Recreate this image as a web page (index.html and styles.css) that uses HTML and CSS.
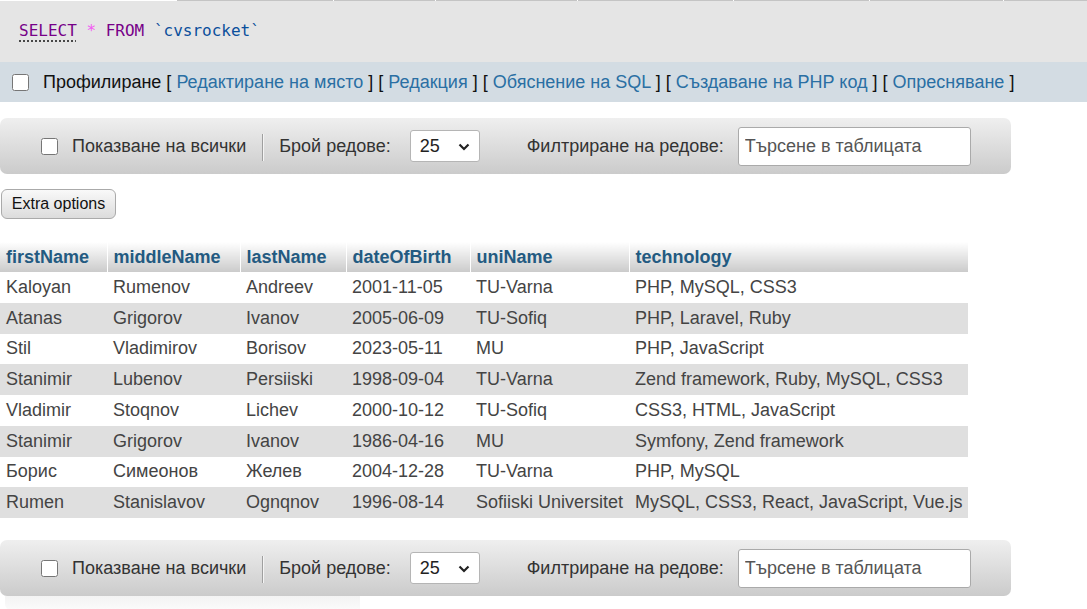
FILE: index.html
```html
<!DOCTYPE html>
<html lang="bg">
<head>
<meta charset="utf-8">
<title>cvsrocket</title>
<link rel="stylesheet" href="styles.css">
</head>
<body>
<div class="tabs-line">
  <span class="seg seg-blank"></span>
  <span class="seg s1"></span><span class="seg s2"></span><span class="seg s3"></span><span class="seg s4"></span><span class="seg s5"></span><span class="seg s6"></span><span class="seg s7"></span>
</div>
<div class="sql-box">
  <code class="sql"><span class="kw kw-link">SELECT</span> <span class="op">*</span> <span class="kw">FROM</span> <span class="var">`cvsrocket`</span></code>
</div>
<div class="profiling">
  <input type="checkbox" class="chk">
  <span class="prof-links">Профилиране <span class="br">[</span> <a class="lnk">Редактиране на място</a> <span class="br">]</span> <span class="br">[</span> <a class="lnk">Редакция</a> <span class="br">]</span> <span class="br">[</span> <a class="lnk">Обяснение на SQL</a> <span class="br">]</span> <span class="br">[</span> <a class="lnk">Създаване на PHP код</a> <span class="br">]</span> <span class="br">[</span> <a class="lnk">Опресняване</a> <span class="br">]</span></span>
</div>

<div class="navbar nav-top">
  <input type="checkbox" class="chk">
  <span class="nav-label">Показване на всички</span>
  <span class="sep"></span>
  <span class="nav-label">Брой редове:</span>
  <div class="select"><span>25</span><svg width="12" height="8" viewBox="0 0 12 8"><path d="M1.5 1.5 L6 6 L10.5 1.5" fill="none" stroke="#222" stroke-width="2.2"/></svg></div>
  <span class="nav-label filter-label">Филтриране на редове:</span>
  <input type="text" class="search" placeholder="Търсене в таблицата">
</div>

<button class="extra">Extra options</button>

<table class="results">
  <colgroup>
    <col class="c1"><col class="c2"><col class="c3"><col class="c4"><col class="c5"><col class="c6">
  </colgroup>
  <thead>
    <tr><th>firstName</th><th>middleName</th><th>lastName</th><th>dateOfBirth</th><th>uniName</th><th>technology</th></tr>
  </thead>
  <tbody>
    <tr><td>Kaloyan</td><td>Rumenov</td><td>Andreev</td><td>2001-11-05</td><td>TU-Varna</td><td>PHP, MySQL, CSS3</td></tr>
    <tr><td>Atanas</td><td>Grigorov</td><td>Ivanov</td><td>2005-06-09</td><td>TU-Sofiq</td><td>PHP, Laravel, Ruby</td></tr>
    <tr><td>Stil</td><td>Vladimirov</td><td>Borisov</td><td>2023-05-11</td><td>MU</td><td>PHP, JavaScript</td></tr>
    <tr><td>Stanimir</td><td>Lubenov</td><td>Persiiski</td><td>1998-09-04</td><td>TU-Varna</td><td>Zend framework, Ruby, MySQL, CSS3</td></tr>
    <tr><td>Vladimir</td><td>Stoqnov</td><td>Lichev</td><td>2000-10-12</td><td>TU-Sofiq</td><td>CSS3, HTML, JavaScript</td></tr>
    <tr><td>Stanimir</td><td>Grigorov</td><td>Ivanov</td><td>1986-04-16</td><td>MU</td><td>Symfony, Zend framework</td></tr>
    <tr><td>Борис</td><td>Симеонов</td><td>Желев</td><td>2004-12-28</td><td>TU-Varna</td><td>PHP, MySQL</td></tr>
    <tr><td>Rumen</td><td>Stanislavov</td><td>Ognqnov</td><td>1996-08-14</td><td>Sofiiski Universitet</td><td>MySQL, CSS3, React, JavaScript, Vue.js</td></tr>
  </tbody>
</table>

<div class="navbar nav-bottom">
  <input type="checkbox" class="chk">
  <span class="nav-label">Показване на всички</span>
  <span class="sep"></span>
  <span class="nav-label">Брой редове:</span>
  <div class="select"><span>25</span><svg width="12" height="8" viewBox="0 0 12 8"><path d="M1.5 1.5 L6 6 L10.5 1.5" fill="none" stroke="#222" stroke-width="2.2"/></svg></div>
  <span class="nav-label filter-label">Филтриране на редове:</span>
  <input type="text" class="search" placeholder="Търсене в таблицата">
</div>
<div class="fade-strip"></div>
</body>
</html>
```

FILE: styles.css
```css
html, body {
  margin: 0;
  padding: 0;
  background: #fff;
}
body {
  font-family: "Liberation Sans", Arial, sans-serif;
  font-size: 18px;
  color: #444;
  overflow: hidden;
}

.tabs-line {
  display: flex;
  height: 1px;
  gap: 1px;
}
.seg { display: block; height: 1px; background: #c4c4c4; }
.seg-blank { width: 176px; background: #fff; }
.s1 { width: 156px; }
.s2 { width: 101px; }
.s3 { width: 141px; }
.s4 { width: 155px; }
.s5 { width: 135px; }
.s6 { width: 133px; }
.s7 { flex: 1; }

.sql-box {
  background: #e5e5e5;
  height: 61px;
  box-sizing: border-box;
  padding: 19px 0 0 19px;
}
.sql {
  font-family: "DejaVu Sans Mono", "Liberation Mono", monospace;
  font-size: 16px;
  line-height: 20px;
  color: #333;
}
.kw { color: #770088; }
.kw-link {
  text-decoration: underline dotted #222;
  text-underline-offset: 5px;
}
.op { color: #f25cf2; }
.var { color: #0b4f9c; }

.profiling {
  background: #d3dce3;
  height: 40px;
  display: flex;
  align-items: center;
  padding-left: 12px;
  color: #111;
}
.profiling .chk { margin: 0 14px 0 0; }
.prof-links { white-space: nowrap; }
.lnk { color: #2a6fa3; }
.br { color: #111; }

.chk {
  width: 17px;
  height: 17px;
  margin: 0;
  flex: none;
}

.navbar {
  width: 1011px;
  height: 56px;
  box-sizing: border-box;
  border-radius: 7px;
  background: linear-gradient(#efefef, #cbcbcb);
  display: flex;
  align-items: center;
  padding-left: 41px;
  color: #333;
}
.nav-top { margin-top: 16px; }
.nav-bottom { margin-top: 22px; }
.navbar .chk { margin-right: 14px; }
.sep {
  width: 1px;
  height: 27px;
  background: #9f9f9f;
  box-shadow: 1px 0 0 #f4f4f4;
  margin: 2px 16px 0 16px;
}
.select {
  margin-left: 19px;
  width: 70px;
  height: 32px;
  box-sizing: border-box;
  border: 1px solid #b5b5b5;
  border-radius: 3px;
  background: #fff;
  display: flex;
  align-items: center;
  justify-content: space-between;
  padding: 0 9px 0 9px;
  color: #222;
}
.select svg { display: block; margin-top: 1px; }
.filter-label { margin-left: 47px; }
.search {
  margin-left: 14px;
  width: 233px;
  height: 39px;
  box-sizing: border-box;
  border: 1px solid #aaa;
  border-radius: 3px;
  padding: 0 6px;
  font-family: "Liberation Sans", Arial, sans-serif;
  font-size: 18px;
  color: #333;
  background: #fff;
}
.search::placeholder { color: #555; opacity: 1; }

.extra {
  display: block;
  margin: 15px 0 0 1px;
  width: 115px;
  height: 30px;
  box-sizing: border-box;
  border: 1px solid #aaa;
  border-radius: 6px;
  background: linear-gradient(#f9f9f9, #dcdcdc);
  font-family: "Liberation Sans", Arial, sans-serif;
  font-size: 16px;
  color: #111;
  padding: 0;
}

.results {
  margin-top: 23px;
  border-collapse: collapse;
  table-layout: fixed;
  width: 968px;
}
.c1 { width: 107px; }
.c2 { width: 133px; }
.c3 { width: 106px; }
.c4 { width: 124px; }
.c5 { width: 159px; }
.c6 { width: 339px; }
.results th {
  height: 30px;
  padding: 0 6px;
  text-align: left;
  font-weight: bold;
  color: #235a81;
  background: linear-gradient(#fff, #cbcbcb);
  border-right: 1px solid #fff;
  white-space: nowrap;
}
.results th:last-child { border-right: none; }
.results td {
  height: 30.75px;
  padding: 0 6px;
  white-space: nowrap;
  color: #444;
}
.results tbody tr:nth-child(even) td { background: #dfdfdf; }

.fade-strip {
  margin: 0 0 0 5px;
  width: 355px;
  height: 14px;
  background: linear-gradient(#f3f3f3, #fbfbfb);
  border-radius: 0 0 0 6px;
}
```
